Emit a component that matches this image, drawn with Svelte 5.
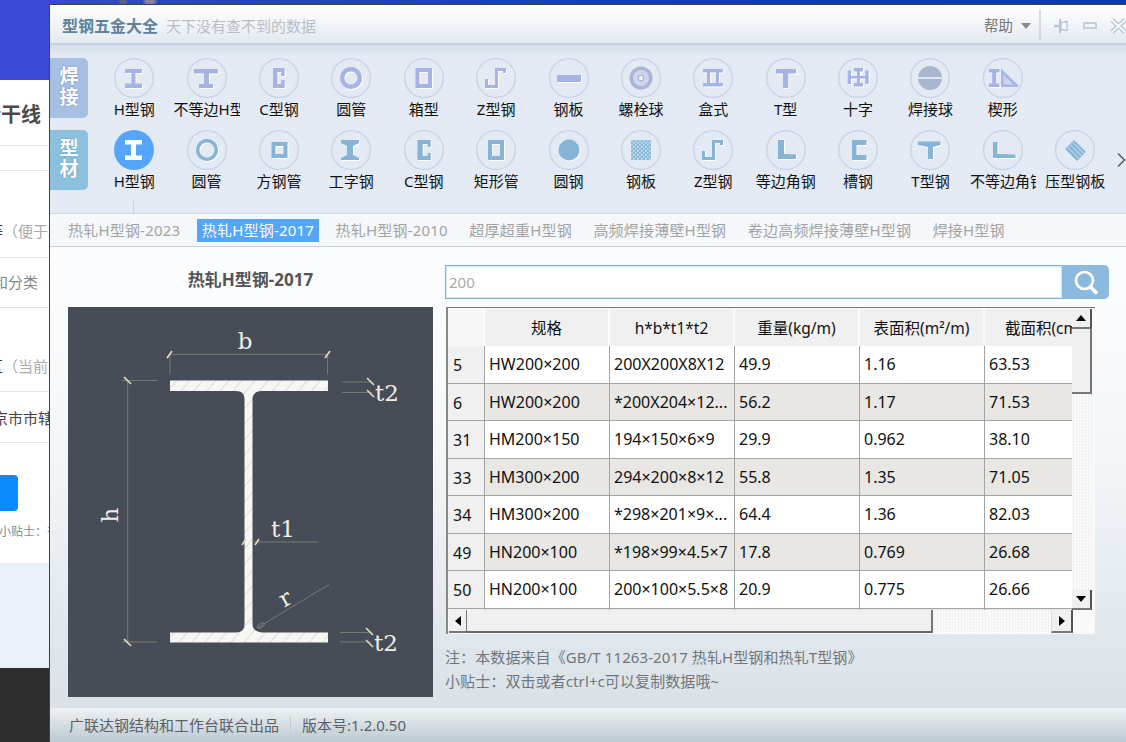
<script>
  // icon rows, d is a path in a 40x40 box
  const hBeam = "M11 11h17v4h-6.5v10.5H28V30H11v-4.5h6.5V15H11z";
  const zBeam = "M19 10h11v5h-3v-2h-5v17H9v-9h3v6h7z";
  const weldRow = [
    { label: "H型钢", d: hBeam },
    { label: "不等边H型", d: "M7 11h24v4.500h-9V26h4v4H12v-4h5V15.500H7z" },
    { label: "C型钢", d: "M14 10h11.700v8h-3.500v-4h-3.700v12h3.700v-4h3.500v8H14z" },
    { label: "圆管", d: "M20 9a11 11 0 1 0 .01 0zM20 13.500a6.500 6.500 0 1 1-.01 0z" },
    { label: "箱型", d: "M11.500 10H28v20H11.500zM15.500 14v12h8.500V14z" },
    { label: "Z型钢", d: zBeam },
    { label: "钢板", d: "M8 17h24v7H8z" },
    { label: "螺栓球", kind: "bolt" },
    { label: "盒式", d: "M10 11h20v3.500h-4V25h4v3.500H10V25h4V14.500h-4zM17 14.500V25h6V14.500z" },
    { label: "T型", d: "M10 11h20v4.500h-7.700V30H17V15.500h-7z" },
    { label: "十字", d: "M16 10h9v3.500h-3V18h5.300v-5.500h3.400V26h-3.400v-5.500H22V25h3v3.500h-9V25h3v-4.500h-6V26H9.700V12.500H13V18h6v-4.500h-3z" },
    { label: "焊接球", kind: "ball" },
    { label: "楔形", kind: "wedge" },
  ];
  const sectionRow = [
    { label: "H型钢", d: "M11 10h17v4.500h-6v11h6V30H11v-4.500h6v-11h-6z", active: true },
    { label: "圆管", d: "M20 9a11 11 0 1 0 .01 0zM20 12.500a7.500 7.500 0 1 1-.01 0z" },
    { label: "方钢管", d: "M12.500 12h16v16h-16zM16.500 16v8h8v-8z" },
    { label: "工字钢", d: "M10 10h18v3l-6 3v9l6 3v2H10v-2l6-3v-9l-6-3z" },
    { label: "C型钢", d: "M13.500 10h13.200v7h-3v-3h-5v12h5v-3h3v7H13.500z" },
    { label: "矩形管", d: "M12 10h16v20H12zM16 14v12h8V14z" },
    { label: "圆钢", d: "M20 9.500a10.500 10.500 0 1 0 .01 0z" },
    { label: "钢板", kind: "plate" },
    { label: "Z型钢", d: zBeam },
    { label: "等边角钢", d: "M12 10h6v14l12 .500V29H12z" },
    { label: "槽钢", d: "M14 10h14.500v5H18.500v10h10v5H14z" },
    { label: "T型钢", d: "M8 11.500h22.500V15l-7.500 2v12h-5V17l-10-2z" },
    { label: "不等边角钢", d: "M10 12h4.500v12l18 .500V28H10z" },
    { label: "压型钢板", kind: "deck" },
  ];
  const tabs = [
    "热轧H型钢-2023",
    "热轧H型钢-2017",
    "热轧H型钢-2010",
    "超厚超重H型钢",
    "高频焊接薄壁H型钢",
    "卷边高频焊接薄壁H型钢",
    "焊接H型钢",
  ];
  const columns = ["规格", "h*b*t1*t2", "重量(kg/m)", "表面积(m²/m)", "截面积(cm²)"];
  const rows = [
    ["5", "HW200×200", "200X200X8X12", "49.9", "1.16", "63.53"],
    ["6", "HW200×200", "*200X204×12...", "56.2", "1.17", "71.53"],
    ["31", "HM200×150", "194×150×6×9", "29.9", "0.962", "38.10"],
    ["33", "HM300×200", "294×200×8×12", "55.8", "1.35", "71.05"],
    ["34", "HM300×200", "*298×201×9×...", "64.4", "1.36", "82.03"],
    ["49", "HN200×100", "*198×99×4.5×7", "17.8", "0.769", "26.68"],
    ["50", "HN200×100", "200×100×5.5×8", "20.9", "0.775", "26.66"],
    ["", "", "", "", "", ""],
  ];
</script>

{#snippet shape(item)}
  <svg class="icon" class:active={item.active} viewBox="0 0 40 40" width="40" height="40">
    {#if item.active}
      <circle cx="20" cy="20" r="20" fill="#55a5fb" />
    {:else}
      <circle cx="20" cy="20" r="19.400" fill="none" stroke="#c7d2e4" stroke-width="1.200" />
    {/if}
    {#if item.d}
      <path class="fig" d={item.d} fill-rule="evenodd" />
    {:else if item.kind === "bolt"}
      <circle cx="20" cy="20" r="11.500" fill="#a9b5d6" />
      <circle cx="20" cy="20" r="8" fill="#cdd4ec" />
      <circle cx="20" cy="20" r="2.800" fill="#f1f3f9" stroke="#9ca8c8" />
    {:else if item.kind === "ball"}
      <circle cx="20" cy="20" r="12" fill="#a9b6cd" />
      <path d="M8 20h24" stroke="#dfe5ee" stroke-width="2" />
    {:else if item.kind === "wedge"}
      <path class="fig" d="M6 11h10.500v3.500h-3.200v11h3.200V29H6v-3.500h3.200v-11H6z" />
      <path d="M18 10.500 35 27v2H18z" fill="#a9b5e4" />
      <path d="M20.500 17 30 26.500H20.500z" fill="#ccd5ef" />
    {:else if item.kind === "plate"}
      <rect x="10" y="10" width="20" height="20" fill="#8dbbdc" />
      <rect x="10" y="10" width="20" height="20" fill="url(#speck)" />
    {:else if item.kind === "deck"}
      <path d="M19 10 31 22 22 31 10 19z" fill="#86b6d9" />
      <path d="M12.500 17 24 28.500M15 14.500 26.500 26M17.500 12 29 23.500" stroke="#dbe8f2" stroke-width="1" />
    {/if}
  </svg>
{/snippet}

<div class="desk">
  <div class="behind">
    <div class="banner"></div>
    <div class="line heading"><span>新干线</span></div>
    <div class="line blank"></div>
    <div class="line tall"><span class="pull"><b>等</b><i>&#xFF08;便于填写&#xFF09;</i></span></div>
    <div class="line short"><span class="grey pull-small">和分类</span></div>
    <div class="line tall2"><span class="pull"><b>区</b><i>&#xFF08;当前城市&#xFF09;</i></span></div>
    <div class="line short2"><span class="pull-small">京市市辖区</span></div>
    <div class="submit">
      <div class="submit-btn"></div>
      <p>小贴士&#xFF1A;有</p>
    </div>
    <div class="pale"></div>
    <div class="dark"></div>
  </div>

  <div class="window">
    <header class="titlebar">
      <strong>型钢五金大全</strong>
      <span class="slogan">天下没有查不到的数据</span>
      <span class="spacer"></span>
      <span class="help">帮助</span>
      <span class="caret"></span>
      <span class="sep"></span>
      <svg class="ctl" width="16" height="14" viewBox="0 0 16 14">
        <path d="M0 7h6" stroke="#b6c6d3" stroke-width="2.400" />
        <path d="M6 0v14" stroke="#b6c6d3" stroke-width="2" />
        <path d="M7 3.500 13 2.500v9L7 10.500z" fill="#f4f7fa" stroke="#b6c6d3" stroke-width="1.400" />
      </svg>
      <svg class="ctl" width="14" height="7" viewBox="0 0 14 7">
        <rect x="1" y="1" width="12" height="5" fill="#f4f7fa" stroke="#b6c6d3" stroke-width="1.600" />
      </svg>
      <svg class="ctl close" width="18" height="16" viewBox="0 0 18 16">
        <path d="M2 2l13 12M15 2 2 14" fill="none" stroke="#b6c6d3" stroke-width="4.500" />
        <path d="M2 2l13 12M15 2 2 14" fill="none" stroke="#f4f7fa" stroke-width="2" />
      </svg>
    </header>

    <section class="catalog">
      <svg class="defs" width="0" height="0">
        <defs>
          <pattern id="speck" width="4" height="4" patternUnits="userSpaceOnUse">
            <rect x="0" y="0" width="1.500" height="1.500" fill="#d9e7f2" />
            <rect x="2" y="2" width="1.500" height="1.500" fill="#c3d9ea" />
          </pattern>
          <pattern id="hatch" width="10" height="10" patternUnits="userSpaceOnUse" patternTransform="rotate(40)">
            <rect width="10" height="10" fill="#f6f6f4" />
            <rect width="0.800" height="10" fill="#d6d6d0" />
          </pattern>
        </defs>
      </svg>
      <div class="sides">
        <div class="side weld">焊<br />接</div>
        <div class="side section">型<br />材</div>
      </div>
      <div class="rows">
        <div class="row weld-row">
          {#each weldRow as item}
            <div class="item">
              {@render shape(item)}
              <span class="label">{item.label}</span>
            </div>
          {/each}
        </div>
        <div class="row section-row">
          {#each sectionRow as item}
            <div class="item">
              {@render shape(item)}
              <span class="label">{item.label}</span>
            </div>
          {/each}
          <svg class="more" width="9" height="16" viewBox="0 0 9 16">
            <path d="M1 1.500 7.500 8 1 14.500" fill="none" stroke="#55606c" stroke-width="1.500" />
          </svg>
        </div>
        <div class="tick"></div>
      </div>
    </section>

    <nav class="tabs">
      {#each tabs as tab, i}
        <span class="tab" class:on={i === 1}>{tab}</span>
      {/each}
    </nav>

    <main class="content">
      <div class="left">
        <h2>热轧H型钢-2017</h2>
        <svg class="drawing" viewBox="0 0 365 390" width="365" height="390">
          <rect width="365" height="390" fill="#474d57" />
          <g stroke="#85857a" stroke-width="0.8" fill="none">
            <path d="M102 47.300H260M102 47v20M259.500 47v20" />
            <path d="M59.700 73v262M54 73.500h35M54 335h35" />
            <path d="M274 75h30M274 85.500h30M272 325.500h30M272 335h30" />
            <path d="M185 235h65M189 321 261 277.500" />
            <ellipse cx="193" cy="318.500" rx="4" ry="2" transform="rotate(-30 193 318.500)" />
          </g>
          <path
            d="M102 73.500H260V84H194c-6 0-9.500 3-9.500 8V317c0 5 3 8 9.500 8.500h66V335.500H102V325.500h66c6.500-.5 8.500-3.500 8.500-8.500V92c0-5-2.500-8-8.500-8H102z"
            fill="url(#hatch)"
          />
          <g stroke="#e6dcc0" stroke-width="1.600">
            <path d="M99 51 104 44M257 51 262 44" />
            <path d="M56 70 63 77M56 332 63 339" />
            <path d="M299 71 306 78M299 83 306 90M298 321 305 328M298 333 305 340" />
            <path d="M174 238 178 232M187 238 191 232" />
          </g>
          <g class="dim">
            <text x="177" y="42" text-anchor="middle">b</text>
            <text x="0" y="0" text-anchor="middle" transform="translate(50 208) rotate(-90)">h</text>
            <text x="319" y="94" text-anchor="middle">t2</text>
            <text x="318" y="344" text-anchor="middle">t2</text>
            <text x="215" y="230" text-anchor="middle">t1</text>
            <text x="0" y="0" text-anchor="middle" transform="translate(221 298) rotate(-30)">r</text>
          </g>
        </svg>
      </div>

      <div class="right">
        <div class="search">
          <input value="200" readonly />
          <button aria-label="搜索">
            <svg width="26" height="26" viewBox="0 0 26 26">
              <circle cx="11.500" cy="11.500" r="8.500" fill="none" stroke="#fff" stroke-width="2.600" />
              <path d="M17.500 18 23 23.500" stroke="#fff" stroke-width="3.600" stroke-linecap="round" />
            </svg>
          </button>
        </div>

        <div class="sheet">
          <div class="sheet-top">
            <div class="grid">
              <div class="grid-row head">
                <div class="rowhead corner"></div>
                {#each columns as col}
                  <div class="cell">{col}</div>
                {/each}
              </div>
              {#each rows as row, r}
                <div class="grid-row" class:alt={r % 2 === 1}>
                  <div class="rowhead">{row[0]}</div>
                  {#each row.slice(1) as value}
                    <div class="cell">{value}</div>
                  {/each}
                </div>
              {/each}
            </div>
            <div class="vbar">
              <div class="btn up"><span class="tri-up"></span></div>
              <div class="vthumb"></div>
              <div class="track"></div>
              <div class="btn down"><span class="tri-down"></span></div>
            </div>
          </div>
          <div class="hbar">
            <div class="btn hbtn"><span class="tri-left"></span></div>
            <div class="hthumb"></div>
            <div class="track"></div>
            <div class="btn hbtn wide"><span class="tri-right"></span></div>
          </div>
        </div>

        <p class="note first">注&#xFF1A;本数据来自《GB/T 11263-2017 热轧H型钢和热轧T型钢》</p>
        <p class="note">小贴士&#xFF1A;双击或者ctrl+c可以复制数据哦~</p>
      </div>
    </main>

    <footer class="foot">
      <span>广联达钢结构和工作台联合出品</span>
      <span class="bar"></span>
      <span>版本号:1.2.0.50</span>
    </footer>
  </div>
</div>

<style>
  :global(body) {
    margin: 0;
    overflow: hidden;
  }
  .desk {
    position: relative;
    width: 1126px;
    height: 742px;
    overflow: hidden;
    background:
      radial-gradient(circle 5px at 123px 1px, #5a5f90 0 60%, transparent 100%),
      radial-gradient(circle 8px at 150px 0, #8d7fa6 0 50%, transparent 100%),
      linear-gradient(90deg, #3c49d9 0, #2747c6 15%, #0f3fb2 60%, #0c3aa8 100%);
    font-family: "Noto Sans", "Noto Sans CJK SC", sans-serif;
  }

  /* the page that is left behind the window */
  .behind {
    width: 49px;
    height: 742px;
    overflow: hidden;
    display: flex;
    flex-direction: column;
    white-space: nowrap;
    background: #fff;
  }
  .banner {
    height: 80px;
    flex: none;
    background: #3c49d9;
  }
  .line {
    flex: none;
    box-sizing: border-box;
    border-bottom: 1px solid #e6e6e6;
    display: flex;
    align-items: center;
    font-size: 15px;
    color: #444;
  }
  .heading {
    height: 66px;
    font-size: 20px;
    font-weight: 700;
    justify-content: flex-end;
    padding: 2px 8px 0 0;
    color: #4a4a4a;
  }
  .blank {
    height: 25px;
  }
  .tall {
    height: 87px;
    padding-top: 33px;
  }
  .short {
    height: 50px;
    padding-bottom: 2px;
  }
  .tall2 {
    height: 84px;
    padding-top: 32px;
  }
  .short2 {
    height: 51px;
  }
  .pull {
    margin-left: -12px;
  }
  .pull b {
    font-weight: 400;
    color: #333;
  }
  .pull i {
    font-style: normal;
    color: #aaa;
  }
  .pull-small {
    margin-left: -7px;
  }
  .grey {
    color: #888;
  }
  .submit {
    height: 120px;
    flex: none;
    padding-top: 32px;
    box-sizing: border-box;
  }
  .submit-btn {
    width: 18px;
    height: 36px;
    background: #0a8cff;
    border-radius: 0 4px 4px 0;
  }
  .submit p {
    margin: 11px 0 0 -1px;
    font-size: 12px;
    color: #888;
  }
  .pale {
    height: 105px;
    flex: none;
    background: #eaf0f8;
  }
  .dark {
    flex: 1;
    background: #2e2e2e;
  }

  .window {
    position: absolute;
    left: 49px;
    top: 4px;
    right: 0;
    bottom: 0;
    display: flex;
    flex-direction: column;
    border-left: 1px solid #3f4348;
    border-top: 1px solid #3f4348;
    background: #eef2f5;
  }
  .titlebar {
    height: 38px;
    flex: none;
    box-sizing: content-box;
    display: flex;
    align-items: center;
    padding: 0 0 0 12px;
    background: linear-gradient(#ffffff, #e3e9f1);
    border-bottom: 2px solid #c5d0de;
  }
  .titlebar strong {
    font-size: 16px;
    color: #5f8299;
    margin-top: 2px;
  }
  .slogan {
    font-size: 15px;
    color: #b7bec5;
    margin: 2px 0 0 8px;
  }
  .spacer {
    flex: 1;
  }
  .help {
    font-size: 14.500px;
    color: #777;
    margin-top: 1px;
  }
  .caret {
    width: 0;
    height: 0;
    border-left: 5px solid transparent;
    border-right: 5px solid transparent;
    border-top: 6px solid #888;
    margin: 4px 0 0 8px;
  }
  .sep {
    width: 2px;
    height: 30px;
    background: #d3dbe3;
    margin: 2px 0 0 8px;
  }
  .ctl {
    margin: 3px 0 0 13px;
    flex: none;
  }
  .ctl.close {
    margin-right: -2px;
  }

  .catalog {
    height: 168px;
    flex: none;
    display: flex;
    box-sizing: border-box;
    background: linear-gradient(#d3dde9, #e3eaf3 11px);
    position: relative;
  }
  .defs {
    position: absolute;
  }
  .sides {
    width: 38px;
    flex: none;
    padding-top: 13px;
    display: flex;
    flex-direction: column;
    gap: 12px;
  }
  .side {
    height: 60px;
    border-radius: 0 5px 5px 0;
    color: #fff;
    font-size: 19px;
    font-weight: 700;
    line-height: 21px;
    text-align: center;
    padding-top: 8px;
    box-sizing: border-box;
  }
  .weld {
    background: #a7bfe2;
    text-shadow: 0 0 2px #6e8fc4;
  }
  .section {
    background: #8cc0de;
    text-shadow: 0 0 2px #5d9cc0;
  }
  .rows {
    flex: 1;
    padding: 13px 0 0 10px;
    min-width: 0;
  }
  .row {
    display: flex;
    height: 72px;
    position: relative;
  }
  .item {
    width: 72.400px;
    flex: none;
    display: flex;
    flex-direction: column;
    align-items: center;
  }
  .label {
    width: 66px;
    overflow: hidden;
    white-space: nowrap;
    text-align: center;
    font-size: 15px;
    line-height: 18px;
    margin-top: 2px;
    color: #111;
  }
  .icon {
    display: block;
    flex: none;
  }
  .fig {
    filter: drop-shadow(1px 1px 0 #fff);
  }
  .weld-row .fig {
    fill: #a7b3e4;
  }
  .section-row .fig {
    fill: #85b4d6;
  }
  .section-row .icon.active .fig {
    fill: #fff;
    filter: none;
  }
  .more {
    position: absolute;
    right: 0;
    top: 22px;
  }
  .tick {
    width: 1px;
    height: 12px;
    margin: -1px 0 0 35px;
    background: #c8d2de;
  }

  .tabs {
    height: 34px;
    flex: none;
    box-sizing: border-box;
    display: flex;
    align-items: center;
    gap: 11.500px;
    padding: 0 0 0 13px;
    background: #f5f8fb;
    border-top: 1px solid #ced6e0;
    border-bottom: 1px solid #c8d0da;
    white-space: nowrap;
  }
  .tab {
    font-size: 15px;
    letter-spacing: 0.2px;
    line-height: 23px;
    padding: 0 5px;
    color: #a3a3a3;
  }
  .tab.on {
    background: #55a5fb;
    color: #fff;
  }

  .content {
    flex: 1;
    display: flex;
    gap: 12px;
    padding: 18px 0 0 18px;
    background: linear-gradient(#fcfdfe, #f3f6f9 45%, #d9e1e7);
    min-height: 0;
  }
  .left {
    width: 365px;
    flex: none;
  }
  .left h2 {
    margin: 2px 0 0;
    height: 40px;
    font-size: 17px;
    line-height: 26px;
    font-weight: 700;
    color: #555;
    text-align: center;
  }
  .drawing {
    display: block;
  }
  .dim text {
    font-family: "DejaVu Serif", serif;
    font-size: 23px;
    fill: #f0eee4;
  }

  .right {
    width: 664px;
    flex: none;
  }
  .search {
    display: flex;
    height: 34px;
  }
  .search input {
    flex: 1;
    min-width: 0;
    box-sizing: border-box;
    border: 1px solid #80b4de;
    border-right: 0;
    box-shadow: inset 0 0 0 1px #d5e6f3;
    outline: 0;
    padding: 0 3px;
    font: 15px "Noto Sans", sans-serif;
    color: #aaa;
    background: #fff;
  }
  .search button {
    width: 47px;
    flex: none;
    border: 0;
    padding: 0;
    border-radius: 0 5px 5px 0;
    background: #8cbade;
    display: flex;
    align-items: center;
    justify-content: center;
  }

  .sheet {
    width: 649px;
    height: 327px;
    margin: 8px 0 0 1px;
    box-sizing: border-box;
    border-top: 1px solid #777;
    border-left: 2px solid #888;
    background: #f7f9fb;
    padding-top: 1px;
  }
  .sheet-top {
    display: flex;
    height: 301px;
  }
  .grid {
    width: 624px;
    overflow: hidden;
    flex: none;
    background: #fff;
  }
  .grid-row {
    display: grid;
    grid-template-columns: 37px 125px 125px 125px 125px 125px;
    height: 37.500px;
    box-sizing: border-box;
    border-bottom: 1px solid #a3a3a3;
    font-size: 16px;
    color: #111;
    background: #fff;
  }
  .grid-row.alt {
    background: #e8e7e3;
  }
  .cell {
    border-right: 1px solid #a3a3a3;
    padding: 0 4px;
    display: flex;
    align-items: center;
    white-space: nowrap;
    overflow: hidden;
  }
  .rowhead {
    background: #f0f0f0;
    border-right: 1px solid #a3a3a3;
    padding: 2px 0 0 5px;
    display: flex;
    align-items: center;
  }
  .grid-row.head {
    height: 37px;
    border-bottom: 0;
    background: #f0f0f0;
    font-size: 15.500px;
  }
  .head .cell {
    justify-content: center;
    border-right: 2px solid #fafafa;
    overflow: hidden;
  }
  .head .rowhead {
    background: #f7f7f7;
    border-right: 1px solid #fff;
  }
  .vbar {
    width: 20px;
    flex: none;
    display: flex;
    flex-direction: column;
  }
  .btn {
    background: #f0f0f0;
    display: flex;
    align-items: center;
    justify-content: center;
    box-sizing: border-box;
    border-right: 2px solid #555;
    border-bottom: 2px solid #777;
    flex: none;
  }
  .up,
  .down {
    height: 20px;
  }
  .vthumb {
    height: 65px;
    flex: none;
    background: #f0f0f0;
    box-sizing: border-box;
    border-right: 2px solid #777;
    border-bottom: 2px solid #777;
  }
  .track {
    flex: 1;
    background: repeating-conic-gradient(#f2f2f2 0 25%, #fdfdfd 0 50%) 0 0 / 3px 3px;
  }
  .tri-up,
  .tri-down {
    width: 0;
    height: 0;
    border-left: 5px solid transparent;
    border-right: 5px solid transparent;
  }
  .tri-up {
    border-bottom: 6px solid #000;
  }
  .tri-down {
    border-top: 6px solid #000;
  }
  .tri-left,
  .tri-right {
    width: 0;
    height: 0;
    border-top: 5px solid transparent;
    border-bottom: 5px solid transparent;
  }
  .tri-left {
    border-right: 6px solid #000;
  }
  .tri-right {
    border-left: 6px solid #000;
  }
  .hbar {
    display: flex;
    height: 23px;
    width: 624px;
    margin-left: 1px;
  }
  .hbtn {
    width: 18px;
    border-right: 1px solid #777;
  }
  .hbtn.wide {
    width: 22px;
    border-right: 2px solid #555;
    border-left: 1px solid #ddd;
  }
  .hthumb {
    width: 466px;
    flex: none;
    background: #f0f0f0;
    box-sizing: border-box;
    border-right: 2px solid #777;
    border-bottom: 2px solid #666;
  }
  .note {
    margin: 0;
    font-size: 15px;
    letter-spacing: 0.1px;
    line-height: 24px;
    color: #70777c;
  }
  .note.first {
    margin-top: 11px;
  }

  .foot {
    height: 34px;
    flex: none;
    box-sizing: border-box;
    display: flex;
    align-items: center;
    padding: 0 0 2px 19px;
    font-size: 15px;
    color: #5a6066;
    background: linear-gradient(#eef1f3, #bccad3);
  }
  .bar {
    width: 1px;
    height: 16px;
    background: #c3ccd3;
    margin: 0 11px;
  }
</style>
